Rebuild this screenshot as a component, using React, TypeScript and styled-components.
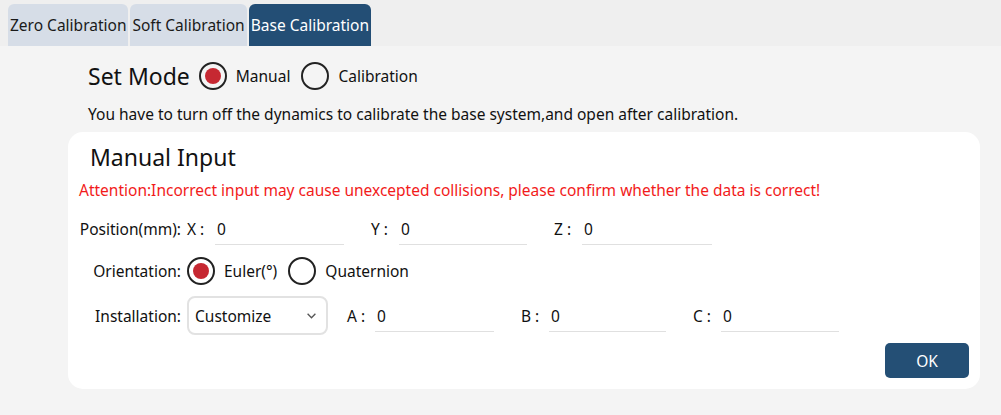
import React from "react";
import styled, { createGlobalStyle } from "styled-components";

const GlobalStyle = createGlobalStyle`
  html, body {
    margin: 0;
    padding: 0;
    background: #f4f4f4;
    font-family: "Noto Sans", "Open Sans", sans-serif;
    color: #111;
  }
`;

const Page = styled.div`
  width: 1001px;
  height: 415px;
  background: #f4f4f4;
  overflow: hidden;
  font-size: 15.5px;
`;

const TabBar = styled.div`
  display: flex;
  gap: 2px;
  height: 46px;
  padding: 4px 0 0 8px;
  box-sizing: border-box;
  background: #efefef;
  align-items: flex-end;
`;

const Tab = styled.div<{ $active?: boolean }>`
  height: 42px;
  display: flex;
  align-items: center;
  padding: 0 2px;
  border-radius: 6px 6px 0 0;
  background: ${(p) => (p.$active ? "#234e75" : "#d6dde7")};
  color: ${(p) => (p.$active ? "#fff" : "#1a1a1a")};
`;

const Body = styled.div`
  padding: 14px 21px 0 68px;
`;

const ModeRow = styled.div`
  display: flex;
  align-items: center;
  height: 32px;
  padding-left: 20px;
  gap: 9px;
`;

const ModeTitle = styled.span`
  font-size: 23px;
`;

const Hint = styled.p`
  margin: 10px 0 0 20px;
  line-height: 24px;
`;

const Card = styled.section`
  margin-top: 6px;
  background: #fff;
  border-radius: 15px;
  height: 257px;
  box-sizing: border-box;
  padding: 9px 11px 0 11px;
  display: flex;
  flex-direction: column;
`;

const CardTitle = styled.h2`
  margin: 0 0 0 11px;
  font-size: 23px;
  font-weight: 400;
  line-height: 32px;
`;

const Warning = styled.div`
  color: #f21b1b;
  line-height: 24px;
  margin-top: 5px;
`;

const FormRow = styled.div<{ $top: number }>`
  display: grid;
  grid-template-columns: 102px 1fr;
  column-gap: 6px;
  align-items: center;
  margin-top: ${(p) => p.$top}px;
`;

const RowLabel = styled.span`
  text-align: right;
  white-space: nowrap;
`;

const Fields = styled.div`
  display: flex;
  align-items: center;
  gap: 27px;
`;

const Field = styled.label`
  display: flex;
  align-items: center;
`;

const FieldName = styled.span`
  width: 28px;
  white-space: pre;
`;

const LineInput = styled.div<{ $w: number }>`
  width: ${(p) => p.$w}px;
  height: 32px;
  box-sizing: border-box;
  border-bottom: 1.5px solid #e0e0e0;
  padding: 3px 0 0 2px;
  line-height: 26px;
`;

const Radios = styled.div`
  display: flex;
  align-items: center;
  gap: 9px;
`;

const RadioDot = styled.span<{ $on?: boolean }>`
  width: 28px;
  height: 28px;
  box-sizing: border-box;
  border: 2.5px solid #222;
  border-radius: 50%;
  display: flex;
  align-items: center;
  justify-content: center;
  margin-left: ${(p) => (p.$on ? 0 : 2)}px;

  &::after {
    content: "";
    width: 16px;
    height: 16px;
    border-radius: 50%;
    background: ${(p) => (p.$on ? "#c62832" : "transparent")};
  }
`;

const Select = styled.div`
  width: 141px;
  height: 39px;
  box-sizing: border-box;
  border: 2px solid #e2e2e2;
  border-radius: 8px;
  display: flex;
  align-items: center;
  justify-content: space-between;
  padding: 0 10px 0 6px;
  margin-right: -8px;
`;

const Footer = styled.div`
  display: flex;
  justify-content: flex-end;
  margin-top: 8px;
`;

const OkButton = styled.button`
  width: 84px;
  height: 35px;
  border: none;
  border-radius: 5px;
  background: #244f75;
  color: #fff;
  font-family: inherit;
  font-size: 15.5px;
`;

const Chevron = () => (
  <svg width="9" height="6" viewBox="0 0 9 6">
    <polyline points="0.6,0.8 4.5,4.8 8.4,0.8" fill="none" stroke="#555" strokeWidth="1.3" />
  </svg>
);

const Radio = ({ on, label }: { on?: boolean; label: string }) => (
  <>
    <RadioDot $on={on} />
    <span>{label}</span>
  </>
);

const LineField = ({ name, w }: { name: string; w: number }) => (
  <Field>
    <FieldName>{name} : </FieldName>
    <LineInput $w={w}>0</LineInput>
  </Field>
);

export default function App() {
  return (
    <Page>
      <GlobalStyle />
      <TabBar>
        <Tab>Zero Calibration</Tab>
        <Tab>Soft Calibration</Tab>
        <Tab $active>Base Calibration</Tab>
      </TabBar>
      <Body>
        <ModeRow>
          <ModeTitle>Set Mode</ModeTitle>
          <Radio on label="Manual" />
          <Radio label="Calibration" />
        </ModeRow>
        <Hint>
          You have to turn off the dynamics to calibrate the base system,and open after calibration.
        </Hint>
        <Card>
          <CardTitle>Manual Input</CardTitle>
          <Warning>
            Attention:Incorrect input may cause unexcepted collisions, please confirm whether the data is correct!
          </Warning>
          <FormRow $top={11}>
            <RowLabel>Position(mm):</RowLabel>
            <Fields>
              <LineField name="X" w={129} />
              <LineField name="Y" w={128} />
              <LineField name="Z" w={130} />
            </Fields>
          </FormRow>
          <FormRow $top={12}>
            <RowLabel>Orientation:</RowLabel>
            <Radios>
              <Radio on label="Euler(°)" />
              <Radio label="Quaternion" />
            </Radios>
          </FormRow>
          <FormRow $top={11}>
            <RowLabel>Installation:</RowLabel>
            <Fields>
              <Select>
                Customize
                <Chevron />
              </Select>
              <LineField name="A" w={119} />
              <LineField name="B" w={117} />
              <LineField name="C" w={118} />
            </Fields>
          </FormRow>
          <Footer>
            <OkButton>OK</OkButton>
          </Footer>
        </Card>
      </Body>
    </Page>
  );
}
